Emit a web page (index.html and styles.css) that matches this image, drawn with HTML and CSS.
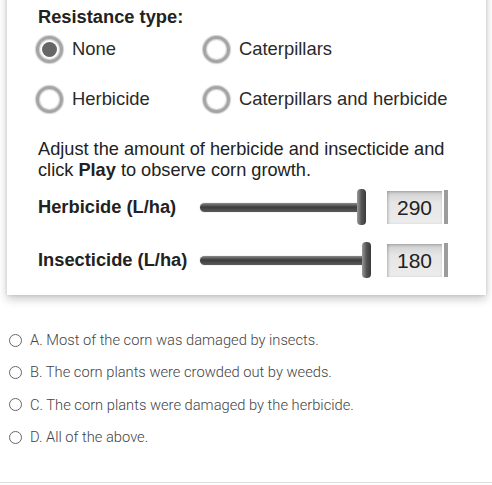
FILE: index.html
```html
<!DOCTYPE html>
<html>
<head>
<meta charset="utf-8">
<link rel="stylesheet" href="styles.css">
</head>
<body>
<div class="card">
  <div class="heading">Resistance type:</div>
  <div class="radios">
    <div class="ropt"><span class="rb checked"></span><span>None</span></div>
    <div class="ropt"><span class="rb"></span><span>Caterpillars</span></div>
    <div class="ropt"><span class="rb"></span><span>Herbicide</span></div>
    <div class="ropt"><span class="rb"></span><span>Caterpillars and herbicide</span></div>
  </div>
  <div class="desc">
    <div class="dline">Adjust the amount of herbicide and insecticide and</div>
    <div class="dline">click <b>Play</b> to observe corn growth.</div>
  </div>
  <div class="srow">
    <div class="slabel">Herbicide (L/ha)</div>
    <div class="slider"><div class="track" style="width:165px"></div><div class="thumb"></div></div>
    <div class="vbox">290</div><div class="vbar"></div>
  </div>
  <div class="srow second">
    <div class="slabel">Insecticide (L/ha)</div>
    <div class="slider"><div class="track" style="width:170px"></div><div class="thumb"></div></div>
    <div class="vbox">180</div><div class="vbar"></div>
  </div>
</div>
<ul class="answers">
  <li><span class="qr"></span>A. Most of the corn was damaged by insects.</li>
  <li><span class="qr"></span>B. The corn plants were crowded out by weeds.</li>
  <li><span class="qr"></span>C. The corn plants were damaged by the herbicide.</li>
  <li><span class="qr"></span>D. All of the above.</li>
</ul>
<div class="rule"></div>
</body>
</html>
```

FILE: styles.css
```css
html, body {
  margin: 0;
  padding: 0;
  background: #fff;
  width: 492px;
  height: 485px;
  overflow: hidden;
}
body {
  font-family: "Liberation Sans", Arial, sans-serif;
  color: #222;
}
.card {
  margin: -20px 6px 0 7px;
  padding: 26px 0 17px 31px;
  background: #fff;
  box-shadow: 0 4px 9px rgba(0,0,0,0.22), 0 0 3px rgba(0,0,0,0.12);
}
.heading {
  font-weight: bold;
  font-size: 18.3px;
  line-height: 21px;
  height: 20px;
}
.radios {
  display: grid;
  grid-template-columns: 167px auto;
  row-gap: 24px;
  margin-top: 10px;
}
.ropt {
  display: flex;
  align-items: center;
  gap: 9px;
  height: 26px;
  font-size: 18.4px;
  color: #2a2a2a;
}
.rb {
  width: 21px;
  height: 21px;
  border-radius: 50%;
  border: 3px solid #a5a5a5;
  box-shadow: 0 0 1px 1px rgba(160,160,160,0.5), inset 0 0 1px 1px rgba(160,160,160,0.5);
  background: #fff;
  position: relative;
  flex: none;
  margin-left: -2px;
}
.rb.checked::after {
  content: "";
  position: absolute;
  left: 3px;
  top: 3px;
  width: 15px;
  height: 15px;
  border-radius: 50%;
  background: #666;
}
.desc {
  margin: 26px 0 0 0;
  font-size: 18.2px;
  color: #222;
}
.dline {
  line-height: 22px;
  height: 21px;
  white-space: nowrap;
}
.desc b { font-weight: bold; }
.srow {
  display: flex;
  align-items: center;
  height: 36px;
  margin-top: 9px;
}
.srow.second { margin-top: 17px; }
.slabel {
  width: 162px;
  font-weight: bold;
  font-size: 18.3px;
  white-space: nowrap;
}
.slider {
  width: 187px;
  height: 36px;
  display: flex;
  align-items: center;
}
.track {
  height: 9px;
  border-radius: 5px;
  background: linear-gradient(#8a8a8a, #3c3c3c 45%, #5a5a5a);
  box-shadow: 0 0 1px rgba(0,0,0,0.4);
}
.thumb {
  width: 9px;
  height: 36px;
  margin-left: -8px;
  border-radius: 4px;
  background: linear-gradient(90deg, #9a9a9a, #555 50%, #3a3a3a);
}
.vbox {
  width: 55px;
  height: 33px;
  line-height: 33px;
  text-align: center;
  font-size: 21px;
  color: #222;
  background: linear-gradient(#cfcfcf, #e6e6e6 35%, #ececec);
  box-shadow: inset 1px 1px 3px rgba(0,0,0,0.25);
}
.vbar {
  width: 4px;
  height: 34px;
  margin-left: 2px;
  background: #9c9c9c;
}
.answers {
  list-style: none;
  margin: 35px 0 0 0;
  padding: 0;
  font-family: Roboto, "Noto Sans", sans-serif;
  font-weight: 300;
  font-size: 14.7px;
  color: #444;
}
.answers li {
  display: flex;
  align-items: center;
  height: 20px;
  margin-bottom: 12.4px;
}
.qr {
  width: 11px;
  height: 11px;
  border: 1px solid #666;
  border-radius: 50%;
  margin: 0 8px 0 9px;
  flex: none;
}
.rule {
  position: absolute;
  left: 0;
  top: 482px;
  width: 492px;
  height: 1px;
  background: #ddd;
}
```
